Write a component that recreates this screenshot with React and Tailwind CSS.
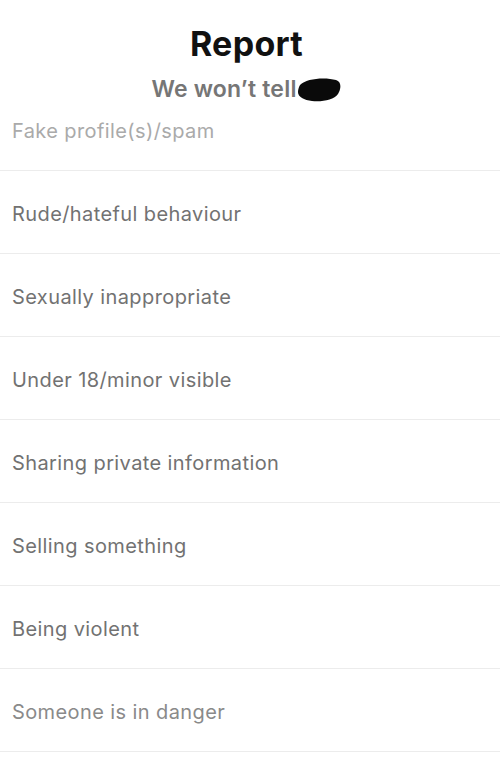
const reasons = [
  { label: 'Fake profile(s)/spam', tone: 'text-[#aaaaaa]' },
  { label: 'Rude/hateful behaviour', tone: 'text-[#727272]' },
  { label: 'Sexually inappropriate', tone: 'text-[#727272]' },
  { label: 'Under 18/minor visible', tone: 'text-[#727272]' },
  { label: 'Sharing private information', tone: 'text-[#727272]' },
  { label: 'Selling something', tone: 'text-[#727272]' },
  { label: 'Being violent', tone: 'text-[#727272]' },
  { label: 'Someone is in danger', tone: 'text-[#8a8a8a]' },
];

function Scribble() {
  return (
    <svg width="46" height="26" viewBox="0 0 46 26" className="-ml-[1px] mt-[3px]">
      <path
        d="M4 8 C10 1 30 0 40 3 C46 5 45 12 42 17 C38 23 26 25 16 24 C8 23 2 20 2 15 C2 12 3 10 4 8 Z"
        fill="#0a0a0a"
      />
    </svg>
  );
}

export default function App() {
  return (
    <div className="w-[500px] h-[773px] overflow-hidden bg-white" style={{ fontFamily: 'Inter, "Noto Sans", sans-serif' }}>
      {/* Header */}
      <div className="relative z-10 h-[115px] bg-white flex flex-col items-center pt-[23px] pr-[7px]">
        <h1 className="text-[34px] leading-[42px] font-bold tracking-[0.3px] text-[#111]">Report</h1>
        <div className="flex items-center mt-[9px]">
          <span className="text-[23px] leading-[28px] font-semibold tracking-[0.2px] text-[#767676]">We won’t tell</span>
          <Scribble />
        </div>
      </div>

      {/* Reasons list */}
      <div className="-mt-[27px]">
        {reasons.map((r) => (
          <button
            key={r.label}
            className="w-full h-[83px] flex items-center px-[12px] pt-[3px] border-b border-[#ececec] text-left"
          >
            <span className={`text-[20px] tracking-[0.4px] ${r.tone}`}>{r.label}</span>
          </button>
        ))}
      </div>
    </div>
  );
}
